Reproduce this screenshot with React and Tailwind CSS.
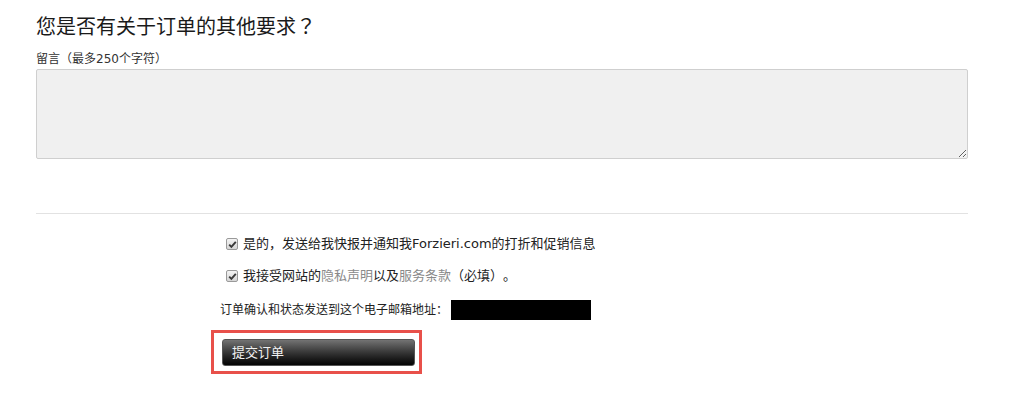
import React, { useState } from 'react'

const font = { fontFamily: '"DejaVu Sans", "Noto Sans CJK SC", sans-serif' }

// centered fullwidth punctuation, like the original's system font
function P({ children }) {
  return <span className="font-['Noto_Sans_CJK_TC',sans-serif] leading-[0]">{children}</span>
}

function Check({ checked, onChange }) {
  return (
    <button type="button" onClick={onChange} className="flex h-[12px] w-[12px] items-center justify-center rounded-[2px] border border-[#9a9a9a] bg-gradient-to-b from-[#f4f4f4] to-[#d6d6d6]">
      {checked && (
        <svg width="9" height="9" viewBox="0 0 9 9">
          <path d="M1.2 4.6 L3.4 6.9 L7.8 1.8" fill="none" stroke="#3a3a3a" strokeWidth="1.9" />
        </svg>
      )}
    </button>
  )
}

export default function App() {
  const [news, setNews] = useState(true)
  const [terms, setTerms] = useState(true)

  return (
    <div className="min-h-[411px] w-[1014px] bg-white text-[#222] [text-spacing-trim:space-all]" style={font}>
      <div className="ml-[36px] w-[932px] pt-[13px]">
        <h2 className="h-[28px] text-[20px] leading-[28px] font-normal text-[#1a1a1a]">您是否有关于订单的其他要求<P>？</P></h2>
        <label className="mt-[9px] mb-[1px] block h-[18px] text-[12px] leading-[18px] text-[#333]">留言<P>（</P>最多250个字符<P>）</P></label>
        <textarea className="block h-[90px] w-full resize rounded-[2px] border border-[#cfcfcf] bg-[#f0f0f0]" />
        <div className="mt-[54px] border-t border-[#e2e2e2]" />

        <div className="pl-[184px] pt-[21px]">
          <div className="flex h-[18px] items-center gap-[5px] pl-[6px] text-[13px] text-[#222]">
            <Check checked={news} onChange={() => setNews((c) => !c)} />
            <span>是的，发送给我快报并通知我Forzieri.com的打折和促销信息</span>
          </div>
          <div className="mt-[14px] flex h-[18px] items-center gap-[5px] pl-[6px] text-[13px] text-[#222]">
            <Check checked={terms} onChange={() => setTerms((c) => !c)} />
            <span>
              我接受网站的<a href="#" className="text-[#8a8a8a]">隐私声明</a>以及<a href="#" className="text-[#8a8a8a]">服务条款</a><P>（</P>必填<P>）</P>。
            </span>
          </div>
          <div className="mt-[15px] flex h-[20px] items-center text-[12px] text-[#222]">
            <span>订单确认和状态发送到这个电子邮箱地址：</span>
            <span className="ml-[3px] h-[20px] w-[140px] bg-black" />
          </div>
          <div className="mt-[10px] ml-[-9px] w-[211px] border-[3px] border-[#e8504a] pl-[8px] pr-[4px] pt-[6px] pb-[5px]">
            <button type="button" className="flex h-[27px] w-[193px] items-center rounded-[3px] border border-[#555] bg-gradient-to-b from-[#737373] to-[#050505] px-[9px] text-[13px] text-[#f2f2f2]">
              提交订单
            </button>
          </div>
        </div>
      </div>
    </div>
  )
}
